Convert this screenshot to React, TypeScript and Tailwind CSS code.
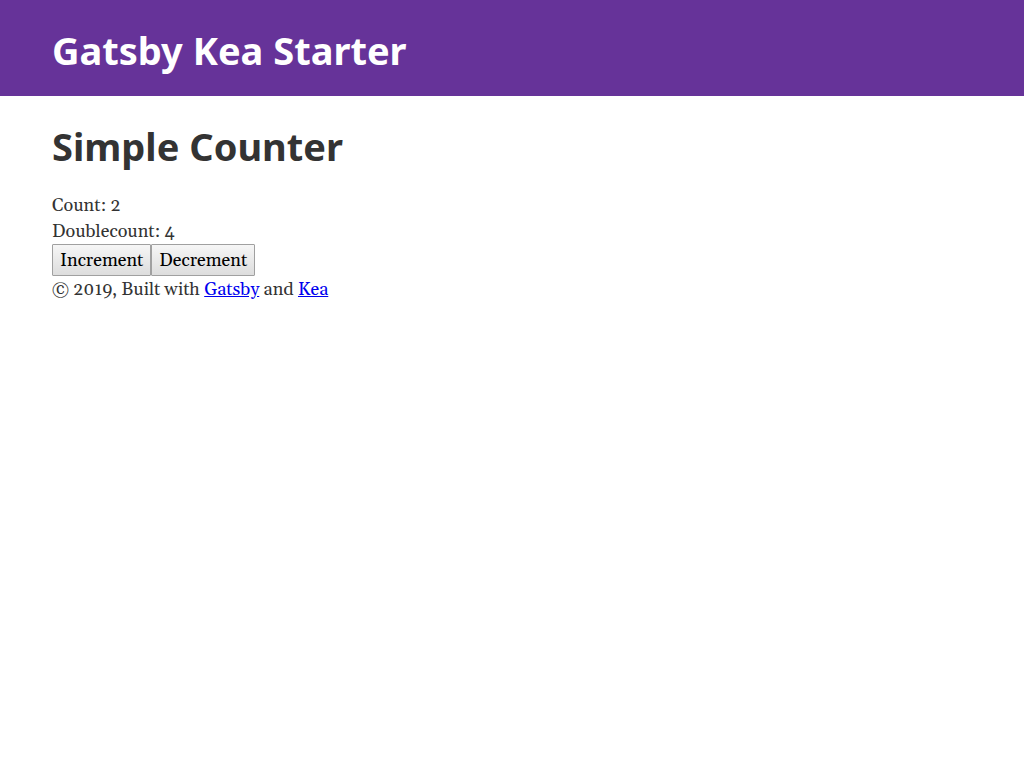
import { useState } from "react";

function Header({ title }: { title: string }) {
  return (
    <header className="bg-[#663399] px-[52px] pt-[26px] pb-[22px]">
      <h1 className="font-['Noto_Sans','Open_Sans',sans-serif] text-[38px] leading-[48px] font-bold text-white">
        <a href="#home">{title}</a>
      </h1>
    </header>
  );
}

const buttonStyle =
  "h-8 rounded-[1px] border border-[#a0a0a0] bg-linear-to-b from-[#f6f6f6] to-[#dddddd] px-[7px] pt-[2px] text-black";

export default function App() {
  const [count, setCount] = useState(2);
  return (
    <div className="font-[Georgia,Gelasio,'Liberation_Serif',serif] text-[18px] leading-[26px] text-[#333333]">
      <Header title="Gatsby Kea Starter" />
      <div className="px-[52px] pt-[26px]">
        <main>
          <h1 className="mb-[23px] font-['Noto_Sans','Open_Sans',sans-serif] text-[38px] leading-[48px] font-bold">
            Simple Counter
          </h1>
          <div>Count: {count}</div>
          <div>Doublecount: {count * 2}</div>
          <div className="-mt-px mb-px flex">
            <button type="button" className={buttonStyle} onClick={() => setCount(count + 1)}>
              Increment
            </button>
            <button type="button" className={buttonStyle} onClick={() => setCount(count - 1)}>
              Decrement
            </button>
          </div>
        </main>
        <footer>
          © 2019, Built with{" "}
          <a href="https://www.gatsbyjs.org" className="text-[#0000ee] underline">
            Gatsby
          </a>{" "}
          and{" "}
          <a href="https://kea.js.org" className="text-[#0000ee] underline">
            Kea
          </a>
        </footer>
      </div>
    </div>
  );
}
